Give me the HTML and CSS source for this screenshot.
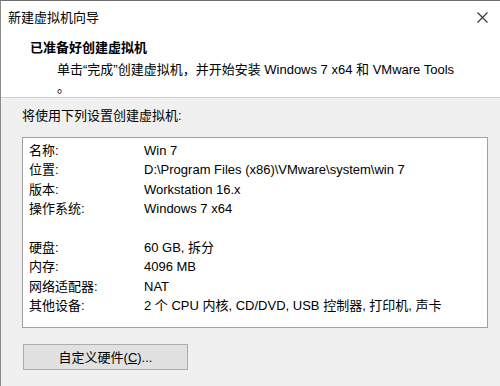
FILE: index.html
```html
<!DOCTYPE html>
<html lang="zh-CN">
<head>
<meta charset="utf-8">
<title>新建虚拟机向导</title>
<link rel="stylesheet" href="styles.css">
</head>
<body>
<div class="window">
  <div class="titlebar">
    <span class="title">新建虚拟机向导</span>
    <svg class="close" width="11" height="11" viewBox="0 0 11 11"><path d="M0.5 0.5 L10.5 10.5 M10.5 0.5 L0.5 10.5" stroke="#333" stroke-width="1.1" fill="none"/></svg>
  </div>
  <div class="header">
    <div class="heading">已准备好创建虚拟机</div>
    <div class="subtitle">单击“完成”创建虚拟机，并开始安装 Windows 7 x64 和 VMware Tools<br>。</div>
  </div>
  <div class="content">
    <div class="intro">将使用下列设置创建虚拟机:</div>
    <div class="summary">
      <div class="row"><span class="label">名称:</span><span class="value">Win 7</span></div>
      <div class="row"><span class="label">位置:</span><span class="value">D:\Program Files (x86)\VMware\system\win 7</span></div>
      <div class="row"><span class="label">版本:</span><span class="value">Workstation 16.x</span></div>
      <div class="row"><span class="label">操作系统:</span><span class="value">Windows 7 x64</span></div>
      <div class="row blank"></div>
      <div class="row"><span class="label">硬盘:</span><span class="value">60 GB, 拆分</span></div>
      <div class="row"><span class="label">内存:</span><span class="value">4096 MB</span></div>
      <div class="row"><span class="label">网络适配器:</span><span class="value">NAT</span></div>
      <div class="row"><span class="label">其他设备:</span><span class="value">2 个 CPU 内核, CD/DVD, USB 控制器, 打印机, 声卡</span></div>
    </div>
    <button class="btn">自定义硬件(<u>C</u>)...</button>
  </div>
</div>
</body>
</html>
```
FILE: styles.css
```css
html, body {
  margin: 0;
  padding: 0;
}
body {
  width: 500px;
  height: 386px;
  overflow: hidden;
  font-family: "Liberation Sans", "Noto Sans CJK SC", sans-serif;
  font-size: 13px;
  color: #000;
  background: #f0f0f0;
}
.window {
  height: 385px;
  border-top: 1px solid #6e6e6e;
  border-left: 1px solid #8a8a8a;
  background: #f0f0f0;
}
.titlebar {
  height: 30px;
  background: #fff;
  display: flex;
  align-items: center;
  justify-content: space-between;
  padding: 0 12px 0 7px;
}
.title {
  line-height: 16px;
  padding-top: 3px;
}
.close {
  display: block;
  margin-top: 3px;
}
.header {
  background: #fff;
  padding: 9px 0 0 29px;
  border-bottom: 1px solid #cfcfcf;
  height: 57px;
}
.heading {
  font-weight: bold;
  line-height: 16px;
  margin-bottom: 5px;
}
.subtitle {
  padding-left: 27px;
  line-height: 18px;
}
.content {
  padding: 9px 12px 0 21px;
}
.intro {
  line-height: 18px;
}
.summary {
  margin-top: 12px;
  background: #fff;
  border: 1px solid #a0a0a0;
  padding: 3px 6px 11px 6px;
}
.row {
  display: grid;
  grid-template-columns: 115px auto;
  height: 19.4px;
  line-height: 19.4px;
  white-space: nowrap;
}
.btn {
  display: block;
  margin-top: 16px;
  width: 165px;
  height: 26px;
  margin-left: 1px;
  background: #e1e1e1;
  border: 1px solid #adadad;
  font: inherit;
  color: #000;
  padding: 0;
}
.btn u {
  text-decoration: underline;
}
```
